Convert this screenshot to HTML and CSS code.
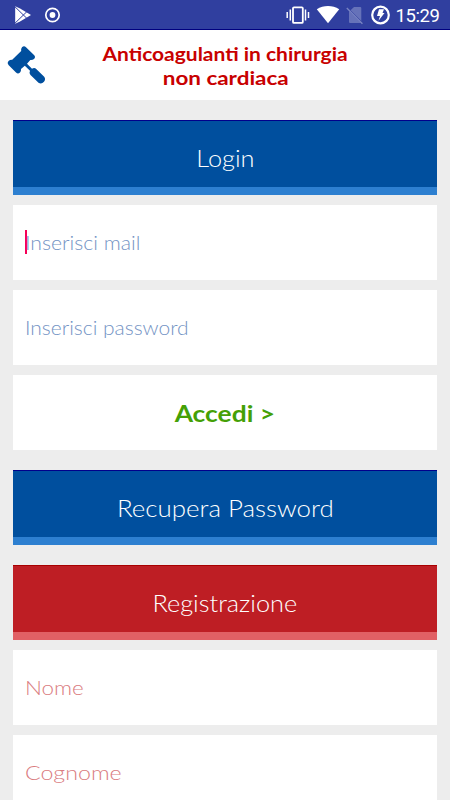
FILE: index.html
```html
<!DOCTYPE html>
<html lang="it">
<head>
<meta charset="utf-8">
<title>Anticoagulanti in chirurgia non cardiaca</title>
<link rel="stylesheet" href="styles.css">
</head>
<body>
<div class="status">
  <svg class="notifications" width="70" height="29" viewBox="0 0 70 29">
    <path d="M15.2 6.3 L20 8.6 L31 15 L20 21.4 L15.2 23.7 Z" fill="#fff"/>
    <path d="M15 6.8 L27 18.5 M15 23.2 L27 11.5" stroke="#303f9f" stroke-width="1"/>
    <circle cx="52.5" cy="15" r="6.7" fill="none" stroke="#fff" stroke-width="1.7"/>
    <circle cx="52.5" cy="15" r="2.9" fill="#fff"/>
  </svg>
  <svg class="indicators" width="108" height="29" viewBox="284 0 108 29">
    <g fill="none" stroke="#fff">
      <rect x="293" y="7.3" width="9.8" height="15.6" rx="1" stroke-width="1.8"/>
      <path d="M290.3 9.5V20.5M305.5 9.5V20.5M287.2 12V18M308.5 12V18" stroke-width="1.5"/>
    </g>
    <path d="M316.8 9.2 C323.5 4.8 332.5 4.8 339.2 9.2 L328 23.3 Z" fill="#fff"/>
    <path d="M350.5 10.2 L354 7 H360.2 Q361.3 7 361.3 8 V21 Z M349 11 L361 22.9 H350 Q349 22.9 349 22 Z" fill="#6672b9"/>
    <path d="M346.8 8 L362.4 23.7" stroke="#7984c3" stroke-width="1.3"/>
    <circle cx="380.5" cy="15" r="8.3" fill="none" stroke="#fff" stroke-width="2.2"/>
    <path d="M379 9.3 H384 L382.5 13 H384.5 L378.5 20.7 L380 16 H377 Z" fill="#fff"/>
  </svg>
  <span class="clock">15:29</span>
</div>
<header class="header">
  <svg class="gavel" width="50" height="50" viewBox="0 40 50 50" fill="#004f9e">
    <path d="M22 47.2 Q24 45.2 26 47.2 L34 55 Q36 57 34 59 Q32.5 60.3 30.3 60 L27 63.8 L32 68.7 Q34.5 67.2 36.500 69.2 L44.2 76.8 Q46 79.5 44 81.8 Q41.5 84.5 38.5 82.8 L30.5 75 Q28.8 73 30 70.8 L24.8 65.800 L21 69 Q21.3 71 20 72.5 Q18 74.5 16 72.5 L8.5 65 Q6.7 63 8.5 61 Q10 59.7 12.200 59.800 L21.200 51 Q20.700 48.700 22 47.2 Z"/>
  </svg>
  <h1><span class="title-main">Anticoagulanti in chirurgia</span><br><span class="title-sub">non cardiaca</span></h1>
</header>
<main>
  <section class="group">
    <div class="bar blue"><span class="login">Login</span></div>
    <div class="field blue-text"><i class="caret"></i><span class="mail">Inserisci mail</span></div>
    <div class="field blue-text"><span class="password">Inserisci password</span></div>
    <div class="submit"><span class="enter">Accedi &gt;</span></div>
  </section>
  <section class="group">
    <div class="bar blue"><span class="recover">Recupera Password</span></div>
  </section>
  <section class="group">
    <div class="bar red"><span class="register">Registrazione</span></div>
    <div class="field red-text"><span class="name">Nome</span></div>
    <div class="field red-text"><span class="surname">Cognome</span></div>
  </section>
</main>
</body>
</html>
```
FILE: styles.css
```css
* { box-sizing: border-box; }
body {
  margin: 0;
  height: 800px;
  overflow: hidden;
  background: #ededed;
  font-family: "Century Gothic", Lato, sans-serif;
}
.status {
  height: 30px;
  display: flex;
  background: #303f9f;
  border-bottom: 1px solid #00007f;
}
.indicators { margin-left: 214px; }
.clock {
  padding-left: 3.5px;
  color: #fff;
  font: 18.5px/32px Roboto, sans-serif;
  letter-spacing: -0.4px;
}
.header {
  height: 70px;
  display: flex;
  align-items: flex-start;
  background: #fff;
}
.gavel { margin-top: 10px; }
h1 {
  margin: 12px 0 0 1.5px;
  width: 348px;
  text-align: center;
  color: #c80000;
  font-size: 19.5px;
  line-height: 23.5px;
  font-weight: 700;
  white-space: nowrap;
}
h1 span, .bar span, .field span, .submit span { display: inline-block; }
.title-main { transform: scaleX(1.075); }
.title-sub { transform: scaleX(1.15); }
main {
  padding: 20px 13px 0;
  display: flex;
  flex-direction: column;
  gap: 20px;
}
.group {
  display: flex;
  flex-direction: column;
  gap: 10px;
}
.bar, .field, .submit {
  height: 75px;
  display: flex;
  align-items: center;
  white-space: nowrap;
}
.bar {
  justify-content: center;
  color: #fff;
  font-size: 23px;
  font-weight: 300;
  border-top: 1px solid;
  border-bottom: 8px solid;
  padding-top: 7px;
}
.blue { background: #004f9e; border-color: #00008b #00008b #2d7fd0; }
.red { background: #be1e24; border-color: #a80000 #a80000 #e16065; }
.field {
  position: relative;
  padding: 0 12px 2px;
  background: #fff;
  font-size: 20px;
  font-weight: 300;
}
.field span { transform-origin: left; }
.blue-text { color: #7393c4; }
.red-text { color: #da7c80; }
.caret {
  position: absolute;
  left: 12px;
  top: 25px;
  width: 2px;
  height: 24px;
  background: #f50057;
}
.submit {
  justify-content: center;
  background: #fff;
  color: #44a006;
  font-size: 22px;
  font-weight: 700;
  padding-top: 1px;
}
.login { transform: scaleX(1.1); }
.recover { transform: scaleX(1.125); }
.register { transform: scaleX(1.1); }
.mail { transform: scaleX(1.06); }
.password { transform: scaleX(1.05); }
.name { transform: scaleX(1.12); }
.surname { transform: scaleX(1.16); }
.enter { transform: scaleX(1.2); }
```
